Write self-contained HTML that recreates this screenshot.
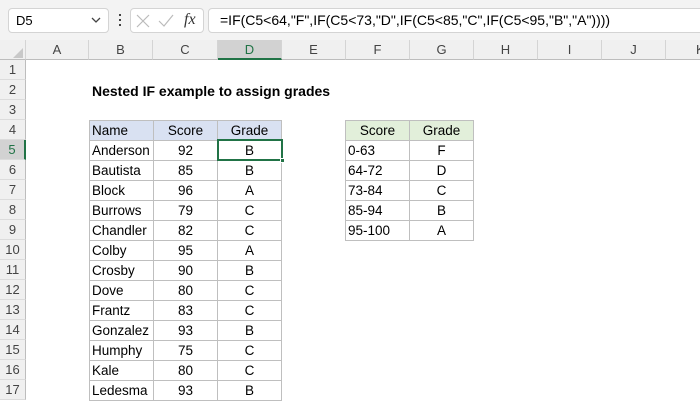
<!DOCTYPE html>
<html><head><style>
body{margin:0;width:700px;height:400px;overflow:hidden;background:#fff;font-family:"Liberation Sans",Arial,sans-serif;position:relative}
.a{position:absolute;box-sizing:border-box}
.top{left:0;top:0;width:700px;height:40px;background:#f3f3f3}
.box{background:#fff;border:1px solid #d4d4d4;border-radius:4px}
.ch{top:40px;height:20px;background:#f0f0f0;border-right:1px solid #d4d4d4;border-bottom:1px solid #bdbdbd;font-size:13px;color:#444;text-align:center;line-height:20px}
.rh{left:0;width:26px;height:20px;background:#f0f0f0;border-right:1px solid #bdbdbd;border-bottom:1px solid #dcdcdc;font-size:13px;color:#444;text-align:center;line-height:20px}
.c{height:21px;width:65px;border:1px solid #bfbfbf;font-size:13.5px;line-height:20px;color:#000;white-space:nowrap;overflow:hidden}
.l{padding-left:2px}.m{text-align:center}
</style></head><body>
<div class="a top"></div>
<div class="a box" style="left:8px;top:8px;width:101px;height:25px;font-size:13px;line-height:23px;padding-left:7px">D5<svg style="position:absolute;right:7px;top:8px" width="10" height="7"><path d="M1 1L5 5L9 1" stroke="#444" fill="none" stroke-width="1.3"/></svg></div>
<div class="a" style="left:119px;top:14px;width:2px;height:2px;background:#444;box-shadow:0 5px #444,0 10px #444"></div>
<div class="a box" style="left:130px;top:8px;width:74px;height:25px">
<svg class="a" style="left:5px;top:5px" width="14" height="14"><path d="M1 1L13 13M13 1L1 13" stroke="#bbb" stroke-width="1.2"/></svg>
<svg class="a" style="left:27px;top:5px" width="16" height="14"><path d="M1 7L6 12L15 1" stroke="#bbb" stroke-width="1.2" fill="none"/></svg>
<span class="a" style="left:53px;top:2px;font-family:'Liberation Serif',serif;font-style:italic;font-size:16px;color:#333">fx</span></div>
<div class="a box" style="left:208px;top:8px;width:500px;height:25px;font-size:14px;line-height:23px;padding-left:11px">=IF(C5&lt;64,"F",IF(C5&lt;73,"D",IF(C5&lt;85,"C",IF(C5&lt;95,"B","A"))))</div>
<div class="a ch" style="left:0;width:26px;background:#f0f0f0"></div>
<svg class="a" style="left:12px;top:47px" width="12" height="12"><path d="M11 1L11 11L1 11Z" fill="#c8c8c8"/></svg>
<div class="a ch" style="left:26px;width:63px">A</div>
<div class="a ch" style="left:89px;width:64px">B</div>
<div class="a ch" style="left:153px;width:65px">C</div>
<div class="a ch" style="left:218px;width:64px;background:#d2d2d2;border-bottom:2px solid #217346;color:#217346">D</div>
<div class="a ch" style="left:282px;width:64px">E</div>
<div class="a ch" style="left:346px;width:64px">F</div>
<div class="a ch" style="left:410px;width:64px">G</div>
<div class="a ch" style="left:474px;width:64px">H</div>
<div class="a ch" style="left:538px;width:64px">I</div>
<div class="a ch" style="left:602px;width:64px">J</div>
<div class="a ch" style="left:666px;width:40px;text-align:left;padding-left:30px">K</div>
<div class="a rh" style="top:60px">1</div><div class="a rh" style="top:80px">2</div><div class="a rh" style="top:100px">3</div><div class="a rh" style="top:120px">4</div>
<div class="a rh" style="top:140px;background:#d2d2d2;color:#217346;border-right:2px solid #217346">5</div>
<div class="a rh" style="top:160px">6</div><div class="a rh" style="top:180px">7</div><div class="a rh" style="top:200px">8</div><div class="a rh" style="top:220px">9</div><div class="a rh" style="top:240px">10</div><div class="a rh" style="top:260px">11</div><div class="a rh" style="top:280px">12</div><div class="a rh" style="top:300px">13</div><div class="a rh" style="top:320px">14</div><div class="a rh" style="top:340px">15</div><div class="a rh" style="top:360px">16</div><div class="a rh" style="top:380px">17</div>
<div class="a" style="left:92px;top:81px;font-size:14px;font-weight:bold;line-height:20px">Nested IF example to assign grades</div>
<div id="t"></div>
<script>
var d=[["Anderson",92,"B"],["Bautista",85,"B"],["Block",96,"A"],["Burrows",79,"C"],["Chandler",82,"C"],["Colby",95,"A"],["Crosby",90,"B"],["Dove",80,"C"],["Frantz",83,"C"],["Gonzalez",93,"B"],["Humphy",75,"C"],["Kale",80,"C"],["Ledesma",93,"B"]];
var h='';
function c(x,y,t,cls,bg){h+='<div class="a c '+cls+'" style="left:'+x+'px;top:'+y+'px;'+(bg?'background:'+bg:'')+'">'+t+'</div>';}
c(89,120,"Name","l","#d9e1f2");c(153,120,"Score","m","#d9e1f2");c(217,120,"Grade","m","#d9e1f2");
d.forEach(function(r,i){var y=140+i*20;c(89,y,r[0],"l");c(153,y,r[1],"m");c(217,y,r[2],"m");});
c(345,120,"Score","m","#e2efda");c(409,120,"Grade","m","#e2efda");
[["0-63","F"],["64-72","D"],["73-84","C"],["85-94","B"],["95-100","A"]].forEach(function(r,i){var y=140+i*20;c(345,y,r[0],"l");c(409,y,r[1],"m");});
h+='<div class="a" style="left:217px;top:139px;width:66px;height:22px;border:2px solid #217346"></div><div class="a" style="left:280px;top:158px;width:5px;height:5px;background:#217346;border:1px solid #fff"></div>';
document.getElementById('t').innerHTML=h;
</script>
</body></html>
